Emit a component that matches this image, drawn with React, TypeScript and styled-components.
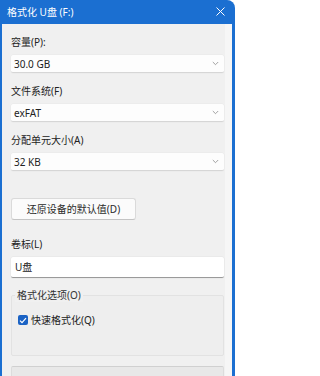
import styled, { createGlobalStyle } from 'styled-components';

const GlobalStyle = createGlobalStyle`
  html, body {
    margin: 0;
    padding: 0;
    background: #ffffff;
  }
  * {
    box-sizing: border-box;
  }
`;

function Chevron() {
  return (
    <svg width="7" height="5" viewBox="0 0 7 5">
      <path d="M0.8 1 L3.5 3.7 L6.2 1" fill="none" stroke="#8a8a8a" strokeWidth="0.8" />
    </svg>
  );
}

function Check() {
  return (
    <svg width="8" height="7" viewBox="0 0 8 7">
      <path d="M1 3.6 L3 5.6 L7 1.2" fill="none" stroke="#ffffff" strokeWidth="1.2" />
    </svg>
  );
}

function Select({ value }: { value: string }) {
  return (
    <SelectBox>
      <span>{value}</span>
      <Chevron />
    </SelectBox>
  );
}

export default function App() {
  return (
    <>
      <GlobalStyle />
      <Window>
        <TitleBar>
          <Title>格式化 U盘 (F:)</Title>
          <CloseButton>
            <svg width="9" height="9" viewBox="0 0 9 9">
              <path d="M0.5 0.5 L8.5 8.5 M8.5 0.5 L0.5 8.5" stroke="#ffffff" strokeWidth="1" />
            </svg>
          </CloseButton>
        </TitleBar>
        <Body>
          <Label>容量(P):</Label>
          <Select value="30.0 GB" />
          <Label $gap={11}>文件系统(F)</Label>
          <Select value="exFAT" />
          <Label $gap={11}>分配单元大小(A)</Label>
          <Select value="32 KB" />
          <ResetButton>还原设备的默认值(D)</ResetButton>
          <Label $gap={17}>卷标(L)</Label>
          <TextInput>U盘</TextInput>
          <GroupBox>
            <Legend>格式化选项(O)</Legend>
            <CheckRow>
              <CheckBox>
                <Check />
              </CheckBox>
              <span>快速格式化(Q)</span>
            </CheckRow>
          </GroupBox>
          <StatusBar />
        </Body>
      </Window>
    </>
  );
}

const Window = styled.div`
  display: flex;
  flex-direction: column;
  width: 235px;
  height: 376px;
  overflow: hidden;
  background: #1b6fd1;
  border-top-right-radius: 8px;
  padding: 0 3px 0 2px;
  font-family: 'Noto Sans', 'Noto Sans CJK SC', sans-serif;
  font-size: 10px;
  color: #222222;
`;

const TitleBar = styled.div`
  display: flex;
  align-items: center;
  justify-content: space-between;
  height: 24px;
  flex-shrink: 0;
  padding: 0 6px 0 5px;
  color: #ffffff;
`;

const Title = styled.span`
  font-size: 10px;
  line-height: 14px;
`;

const CloseButton = styled.div`
  display: flex;
  align-items: center;
  justify-content: center;
  width: 12px;
  height: 12px;
  margin-top: -1px;
`;

const Body = styled.div`
  flex: 1;
  display: flex;
  flex-direction: column;
  background: #f0f0f0;
  padding: 11px 1px 0 9px;
  border-right: 7px solid #f6f6f6;
`;

const Label = styled.div<{ $gap?: number }>`
  height: 14px;
  line-height: 14px;
  margin-top: ${({ $gap }) => $gap ?? 0}px;
  margin-bottom: 6px;
  white-space: nowrap;
`;

const SelectBox = styled.div`
  display: flex;
  align-items: center;
  justify-content: space-between;
  height: 18px;
  padding: 0 5px 0 3px;
  background: #fdfdfd;
  border-radius: 2px;
  border-bottom: 1px solid #d6d6d6;
  box-shadow: 0 0 0 0.5px #e8e8e8;
  line-height: 14px;
`;

const ResetButton = styled.div`
  display: flex;
  align-items: center;
  justify-content: center;
  width: 125px;
  height: 22px;
  margin-top: 27px;
  background: #fbfbfb;
  border: 1px solid #dadada;
  border-bottom-color: #c4c4c4;
  border-radius: 3px;
  line-height: 14px;
  color: #2a2a2a;
`;

const TextInput = styled.div`
  display: flex;
  align-items: center;
  height: 21px;
  padding: 0 4px;
  background: #ffffff;
  border-radius: 2px;
  border-bottom: 1px solid #9a9a9a;
  box-shadow: 0 0 0 0.5px #e4e4e4;
  line-height: 14px;
`;

const GroupBox = styled.div`
  position: relative;
  height: 61px;
  margin-top: 17px;
  padding: 17px 0 0 6px;
  border: 1px solid #e2e2e2;
  border-radius: 2px;
  background: #eeeeee;
`;

const Legend = styled.span`
  position: absolute;
  top: -8px;
  left: 3px;
  padding: 0 2px;
  line-height: 14px;
  background: #f0f0f0;
  color: #333333;
`;

const CheckRow = styled.div`
  display: flex;
  align-items: center;
  gap: 3px;
  line-height: 14px;
`;

const CheckBox = styled.div`
  display: flex;
  align-items: center;
  justify-content: center;
  width: 10px;
  height: 10px;
  border-radius: 2px;
  background: #1a62c4;
`;

const StatusBar = styled.div`
  height: 20px;
  margin-top: 10px;
  background: #e8e8e8;
  border-top: 1px solid #d0d0d0;
  border-left: 1px solid #dcdcdc;
  border-right: 1px solid #dcdcdc;
  border-radius: 2px;
  flex-shrink: 0;
`;
